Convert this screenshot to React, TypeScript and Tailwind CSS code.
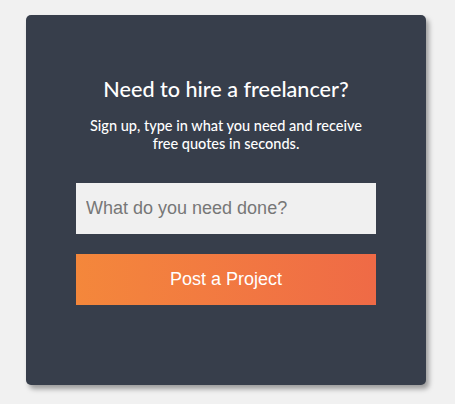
import React from 'react';

export default function App() {
  return (
    <div className="min-h-[404px] w-full bg-[#f1f1f1] pt-[15px] pl-[26px]">
      <div className="w-[400px] h-[370px] rounded-[5px] bg-[#373e4b] shadow-[3px_4px_5px_rgba(0,0,0,0.35)] flex flex-col items-center pt-[60px] font-['Lato',sans-serif] text-white">
        <h2 className="text-[21.6px] leading-[28px] font-medium">Need to hire a freelancer?</h2>
        <p className="mt-[14px] text-[14.5px] leading-[18px] font-medium text-center w-[300px]">
          Sign up, type in what you need and receive free quotes in seconds.
        </p>
        <input
          type="text"
          placeholder="What do you need done?"
          className="mt-[30px] w-[300px] h-[51px] bg-[#f0f0f0] px-[10px] text-[18px] font-['Liberation_Sans',Arial,sans-serif] text-[#333] placeholder:text-[#777] outline-none"
        />
        <button className="mt-[20px] w-[300px] h-[51px] bg-gradient-to-r from-[#f4873b] to-[#ef6a46] text-white text-[18px] font-['Liberation_Sans',Arial,sans-serif]">
          Post a Project
        </button>
      </div>
    </div>
  );
}
